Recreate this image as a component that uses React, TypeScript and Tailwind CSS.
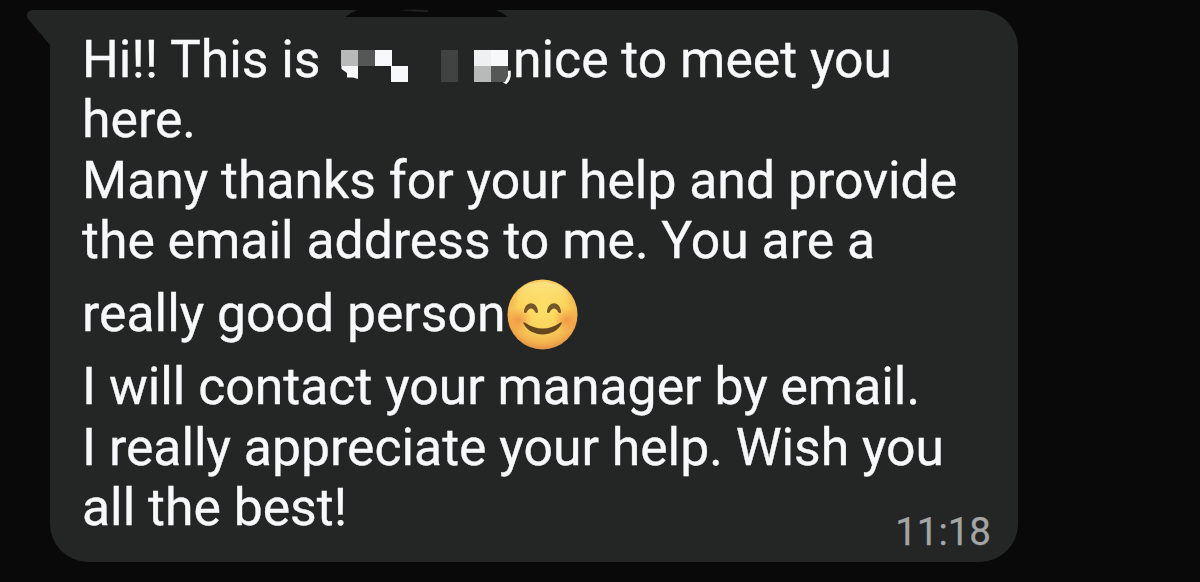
function Redaction() {
  return (
    <svg className="absolute left-[341px] top-[49px]" width="171" height="36" viewBox="0 0 171 36" aria-hidden="true">
      <g shapeRendering="crispEdges">
        <path fill="#b8b9b9" d="M0 1h17v16H0z" />
        <path fill="#555656" d="M17 1h17v16H17z" />
        <path fill="#f7f8fa" d="M34 1h17v16H34zM50 17h17v16H50z" />
        <path fill="#414242" d="M100 1h17v32h-17z" />
        <path fill="#eff0f1" d="M133 1h17v16h-17z" />
        <path fill="#f7f8fa" d="M150 1h17v16h-17z" />
        <path fill="#b8b9b9" d="M133 17h17v16h-17z" />
      </g>
      <path fill="#f7f8fa" d="M.5 17H17v13l-5-1.500H6V24l-5.500-4z" />
      <path fill="#555656" d="M150 17h17v10l-3 6h-14z" />
    </svg>
  );
}

function SmilingFace() {
  return (
    <svg className="ml-px shrink-0" width="71" height="71" viewBox="0 0 71 71" aria-hidden="true">
      <defs>
        <radialGradient id="face" cx=".5" cy=".4" r=".62">
          <stop offset="0" stopColor="#fde066" />
          <stop offset=".55" stopColor="#fad35c" />
          <stop offset=".82" stopColor="#f3b24d" />
          <stop offset="1" stopColor="#e18a42" />
        </radialGradient>
        <radialGradient id="cheek">
          <stop offset="0" stopColor="#ec7c3c" stopOpacity=".65" />
          <stop offset="1" stopColor="#ef8a40" stopOpacity="0" />
        </radialGradient>
        <linearGradient id="shine" x2="0" y2="1">
          <stop offset="0" stopColor="#fff2ae" stopOpacity=".5" />
          <stop offset="1" stopColor="#fde064" stopOpacity="0" />
        </linearGradient>
      </defs>
      <circle cx="35.5" cy="35.5" r="35" fill="url(#face)" />
      <ellipse cx="35.5" cy="17" rx="26" ry="14" fill="url(#shine)" />
      <circle cx="12" cy="41" r="13" fill="url(#cheek)" />
      <circle cx="59" cy="41" r="13" fill="url(#cheek)" />
      <path fill="#73572b" d="M17 32.500c1-11 13-11 14 0 0 2-2.200 2-2.800.5-2.200-4.800-6.200-4.800-8.400 0-.6 1.500-2.800 1.500-2.800-.5zM40 32.500c1-11 13-11 14 0 0 2-2.200 2-2.800.5-2.200-4.800-6.200-4.800-8.400 0-.6 1.500-2.800 1.500-2.800-.5z" />
      <path fill="#65471d" d="M16.500 44.500c-.5-1.300.5-1.800 1.700-.8 10.500 7.700 24.500 7.700 34.800 0 1.200-1 2.200-.5 1.700.8-7 14.500-31 14.500-38.200 0z" />
    </svg>
  );
}

export default function App() {
  return (
    <main className="relative h-[582px] w-[1200px] overflow-hidden bg-[#090909] pl-[50px] pt-[10px] font-['Roboto',sans-serif]">
      <svg className="absolute left-[26px] top-[10px]" width="65" height="42" viewBox="0 0 65 42" aria-hidden="true">
        <path fill="#242625" d="M65 0H7C2 0-1 5 2 9l22 26 41 7z" />
      </svg>
      <article className="relative h-[552px] w-[968px] rounded-[38px] bg-[#242625] pl-8 pt-5 text-[51.7px] leading-[60.4px] whitespace-nowrap text-[#f7f8fa] [-webkit-text-stroke:0.35px_#f7f8fa]">
        <p className="flex justify-between pr-[126px]"><span>Hi!! This is</span><span>,nice to meet you</span></p>
        <p>here.</p>
        <p>Many thanks for your help and provide</p>
        <p>the email address to me. You are a</p>
        <p className="flex h-[85.5px] items-center"><span>really good person</span><SmilingFace /></p>
        <p>I will contact your manager by email.</p>
        <p>I really appreciate your help. Wish you</p>
        <p>all the best!</p>
        <time className="absolute bottom-[9px] right-[27px] text-[38.5px] leading-[42px] text-[#a4a5a5] [-webkit-text-stroke:0.25px_#a4a5a5]">11:18</time>
      </article>
      <svg className="absolute left-[345px] top-[9px]" width="163" height="8" viewBox="0 0 163 8" aria-hidden="true">
        <path fill="#090909" d="M0 8l6-4 8-4h135l8 4 6 4z" />
        <path fill="#20211f" d="M54 1q18-1 29 0v2q-14 0-29-2z" />
      </svg>
      <Redaction />
    </main>
  );
}
